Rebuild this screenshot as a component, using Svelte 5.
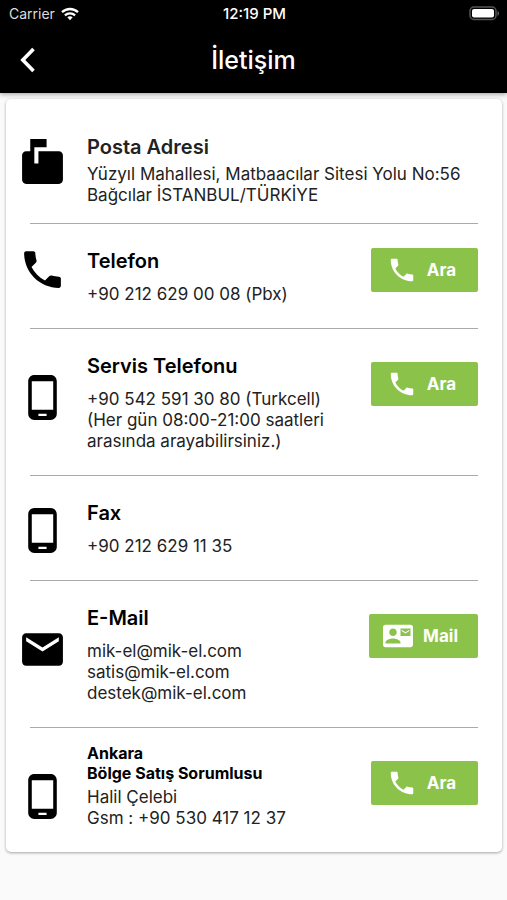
<script lang="ts">
  type Contact = {
    kind: string;
    title: string[];
    lines: string[];
    icon: string;
    action?: string;
  };

  const icons: Record<string, string> = {
    mailbox: 'M20 6H10v6H8V4h6V0H6v6H4c-1.1 0-2 .9-2 2v12c0 1.1.9 2 2 2h16c1.1 0 2-.9 2-2V8c0-1.1-.9-2-2-2z',
    phone: 'M6.62 10.79c1.44 2.83 3.76 5.14 6.59 6.59l2.2-2.2c.27-.27.67-.36 1.02-.24 1.12.37 2.33.57 3.57.57.55 0 1 .45 1 1V20c0 .55-.45 1-1 1-9.39 0-17-7.61-17-17 0-.55.45-1 1-1h3.5c.55 0 1 .45 1 1 0 1.25.2 2.45.57 3.57.11.35.03.74-.25 1.02l-2.2 2.2z',
    mobile: 'M16 1H8C6.34 1 5 2.34 5 4v16c0 1.66 1.34 3 3 3h8c1.66 0 3-1.34 3-3V4c0-1.66-1.34-3-3-3zm-2 20h-4v-1h4v1zm3.25-3H6.75V4h10.5v14z',
    mail: 'M20 4H4c-1.1 0-1.99.9-1.99 2L2 18c0 1.1.9 2 2 2h16c1.1 0 2-.9 2-2V6c0-1.1-.9-2-2-2zm0 4l-8 5-8-5V6l8 5 8-5v2z',
    contact: 'M21 8V7l-3 2-3-2v1l3 2 3-2zm1-5H2C.9 3 0 3.9 0 5v14c0 1.1.9 2 2 2h20c1.1 0 1.99-.9 1.99-2L24 5c0-1.1-.9-2-2-2zM8 6c1.66 0 3 1.34 3 3s-1.34 3-3 3-3-1.34-3-3 1.34-3 3-3zm6 12H2v-1c0-2 4-3.1 6-3.1s6 1.1 6 3.1v1zm8-6h-8V6h8v6z',
  };

  const contacts: Contact[] = [
    {
      kind: 'address',
      title: ['Posta Adresi'],
      lines: ['Yüzyıl Mahallesi, Matbaacılar Sitesi Yolu No:56', 'Bağcılar İSTANBUL/TÜRKİYE'],
      icon: 'mailbox',
    },
    { kind: 'phone', title: ['Telefon'], lines: ['+90 212 629 00 08 (Pbx)'], icon: 'phone', action: 'Ara' },
    {
      kind: 'service',
      title: ['Servis Telefonu'],
      lines: ['+90 542 591 30 80 (Turkcell)', '(Her gün 08:00-21:00 saatleri', 'arasında arayabilirsiniz.)'],
      icon: 'mobile',
      action: 'Ara',
    },
    { kind: 'fax', title: ['Fax'], lines: ['+90 212 629 11 35'], icon: 'mobile' },
    {
      kind: 'email',
      title: ['E-Mail'],
      lines: ['mik-el@mik-el.com', 'satis@mik-el.com', 'destek@mik-el.com'],
      icon: 'mail',
      action: 'Mail',
    },
    {
      kind: 'region',
      title: ['Ankara', 'Bölge Satış Sorumlusu'],
      lines: ['Halil Çelebi', 'Gsm : +90 530 417 12 37'],
      icon: 'mobile',
      action: 'Ara',
    },
  ];
</script>

<header>
  <div class="status">
    <div class="carrier">
      <span>Carrier</span>
      <svg width="18" height="14" viewBox="0 0 18 14" fill="none" stroke="#fff" stroke-width="2.3">
        <path d="M1 5.2C5.5.9 12.5.9 17 5.2" />
        <path d="M3.9 8.3c2.9-2.7 7.3-2.7 10.2 0" />
        <path d="M6.3 10.3c1.6-1.4 3.8-1.4 5.4 0L9 13.2z" fill="#fff" stroke="none" />
      </svg>
    </div>
    <span class="time">12:19 PM</span>
    <div class="battery">
      <svg width="31" height="15" viewBox="0 0 31 15">
        <rect x="1" y="1" width="26" height="12.5" rx="4" fill="none" stroke="#555" stroke-width="1.5" />
        <rect x="3" y="3" width="22" height="8.5" rx="2" fill="#fff" />
        <path d="M28.5 5c2 .8 2 4 0 4.8z" fill="#666" />
      </svg>
    </div>
  </div>
  <nav>
    <button class="back" aria-label="Geri">
      <svg width="16" height="26" viewBox="0 0 16 26" fill="none" stroke="#fff" stroke-width="3.6">
        <path d="M13.5 2L2.8 13l10.7 11" />
      </svg>
    </button>
    <h1>İletişim</h1>
  </nav>
</header>

<main>
  {#each contacts as contact}
    <section class={contact.kind}>
      <svg class="icon" viewBox="0 0 24 24"><path d={icons[contact.icon]} /></svg>
      <div class="info">
        <h2>
          {#each contact.title as part}<span>{part}</span>{/each}
        </h2>
        {#each contact.lines as line}
          <p>{line}</p>
        {/each}
      </div>
      {#if contact.action}
        <button class="action">
          <svg viewBox="0 0 24 24"><path d={icons[contact.action === 'Mail' ? 'contact' : 'phone']} /></svg>
          {contact.action}
        </button>
      {/if}
    </section>
  {/each}
</main>

<style>
  :global(body) {
    background: #fafafa;
    font-family: Inter, 'Liberation Sans', sans-serif;
    color: #222;
  }

  header {
    position: relative;
    background: #000;
    color: #fff;
    box-shadow: 0 1px 5px rgba(0, 0, 0, 0.4);
  }

  .status {
    display: grid;
    grid-template-columns: 1fr auto 1fr;
    align-items: center;
    height: 27px;
    padding: 0 7px 0 9px;
    font-size: 14px;
  }

  .carrier {
    display: flex;
    align-items: center;
    gap: 6px;
    color: #ddd;
  }

  .time {
    font-size: 15px;
    line-height: 20px;
    font-weight: 500;
  }

  .battery {
    display: flex;
    justify-content: flex-end;
  }

  nav {
    display: grid;
    grid-template-columns: 60px 1fr 60px;
    align-items: center;
    height: 66px;
  }

  .back {
    display: flex;
    align-items: center;
    height: 48px;
    padding: 0 0 0 20px;
    border: 0;
    background: none;
    cursor: pointer;
  }

  h1 {
    margin: 0;
    font-size: 25px;
    line-height: 32px;
    font-weight: 500;
    text-align: center;
  }

  main {
    margin: 6px 5px 16px 6px;
    padding: 0 24px;
    border-radius: 5px;
    background: #fff;
    box-shadow: 0 1px 3px rgba(0, 0, 0, 0.35);
  }

  section {
    display: flex;
    align-items: flex-start;
    padding: 24px 0 23px;
    border-bottom: 1px solid #aaa;
  }

  section:last-child {
    border-bottom: 0;
  }

  .icon {
    flex: none;
    width: 49px;
    height: 49px;
    margin: 20px 20px -20px -12px;
  }

  .info {
    flex: 1;
    min-width: 0;
  }

  h2 {
    margin: 0 0 10px;
    font-size: 20px;
    line-height: 26px;
    font-weight: 600;
    color: #000;
  }

  h2 span {
    display: block;
  }

  p {
    margin: 0;
    font-size: 17px;
    line-height: 21px;
    white-space: nowrap;
  }

  .action {
    display: flex;
    flex: none;
    align-items: center;
    justify-content: center;
    gap: 10px;
    min-width: 107px;
    height: 44px;
    margin-top: 9px;
    padding: 0 20px 0 14px;
    border: 0;
    border-radius: 2px;
    background: #8bc34a;
    color: #fff;
    font: 700 17px Inter, 'Liberation Sans', sans-serif;
    cursor: pointer;
  }

  .action svg {
    width: 30px;
    height: 30px;
    fill: #fff;
  }

  .address {
    padding: 35px 0 17px;
  }

  .address .icon {
    margin-top: 5px;
  }

  .address h2 {
    margin-bottom: 4px;
    color: #222;
  }

  .phone .icon {
    margin-top: -3px;
  }

  .phone .action {
    margin-top: 0;
  }

  .fax .icon {
    margin-top: 6px;
  }

  .region {
    padding-top: 15px;
  }

  .region .icon {
    margin-top: 29px;
  }

  .region .action {
    margin-top: 18px;
  }

  .region h2 {
    margin-bottom: 4px;
    font-size: 16px;
    line-height: 20px;
    font-weight: 700;
  }
</style>
